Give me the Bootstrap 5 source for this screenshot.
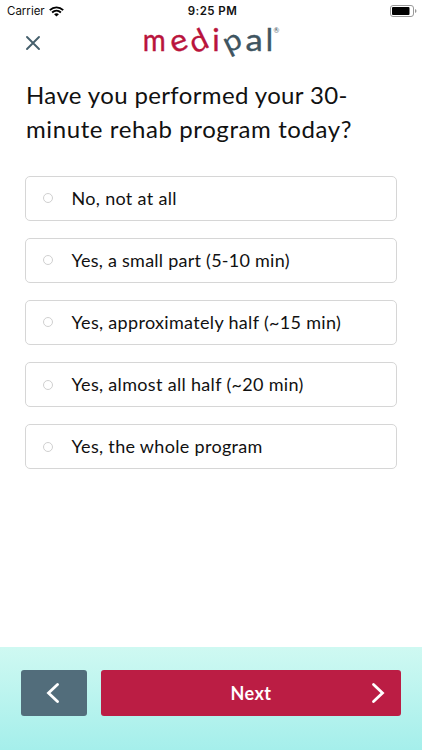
<!DOCTYPE html>
<html lang="en">
<head>
<meta charset="utf-8">
<meta name="viewport" content="width=device-width, initial-scale=1">
<title>Medipal</title>
<link href="https://cdn.jsdelivr.net/npm/bootstrap@5.3.0/dist/css/bootstrap.min.css" rel="stylesheet">
<style>
body { font-family: Lato, sans-serif; color: #111; background: #fff; }
.screen { height: 750px; overflow: hidden; }
.status { height: 22px; font-family: Inter, sans-serif; font-size: 11.5px; line-height: 22px; padding: 0 5px 0 7px; color: #111; }
.status > div { flex: 1 1 0; }
.clock { letter-spacing: .45px; padding-left: 1px; }
.topbar { height: 56px; padding: 0 25px; }
.topbar .close-btn { width: 16px; height: 42px; }
.logo { margin: -12px 0 0 96px; overflow: visible; }
.question { font-size: 24px; line-height: 34px; padding: 0 26px; margin: 0 0 29.5px; font-weight: 400; }
.l1 { letter-spacing: .37px; }
.l2 { letter-spacing: .6px; }
.answers { padding: 0 25px; gap: 17px; }
.answer { height: 45.2px; border: 1px solid #d6d6d6; border-radius: 5px; padding-left: 17px; font-size: 18px; letter-spacing: .32px; cursor: pointer; }
.answer .form-check-input { width: 10px; height: 10px; border: 1px solid #d0d0d0; margin: 0 18.5px 0 0; }
.answer .tight { letter-spacing: .25px; }
.footer-bar { height: 103px; padding: 23px 21px 0 21px; gap: 14px; background: linear-gradient(#cff9f2, #a5efeb); }
.footer-bar .btn { height: 46px; border: 0; border-radius: 3px; color: #fff; }
.btn-back { width: 66px; background: #526d7b; }
.footer-bar .btn-next { background: #bb1d44; font-size: 18px; font-weight: 700; letter-spacing: .5px; }
.btn-next .chevron { width: 32px; }
.next-label { padding-left: 32px; }
</style>
<script src="https://cdn.jsdelivr.net/npm/bootstrap@5.3.0/dist/js/bootstrap.bundle.min.js"></script>
</head>
<body>
<div class="screen d-flex flex-column">
  <div class="status d-flex">
    <div class="d-flex align-items-center"><span>Carrier</span>
      <svg class="ms-1" width="15" height="11" viewBox="0 0 15 11" fill="none" stroke="#000" stroke-width="1.9"><path d="M.8 4.1C4.7.4 10.3.4 14.2 4.1M3.1 6.5c2.6-2.3 6.2-2.3 8.8 0"/><path d="M7.5 10.6 5.1 8.2c1.4-1.2 3.4-1.2 4.8 0z" fill="#000" stroke="none"/></svg>
    </div>
    <div class="clock text-center fw-semibold">9:25 PM</div>
    <div class="d-flex justify-content-end align-items-center">
      <svg width="27" height="12" viewBox="0 0 27 12"><rect x=".5" y=".5" width="23" height="11" rx="2.5" fill="#fff" stroke="#999"/><rect x="2" y="2" width="17.5" height="8" rx="1" fill="#000"/><path d="M25 4v4q1.5-.6 1.5-2T25 4" fill="#999"/></svg>
    </div>
  </div>
  <header class="topbar d-flex align-items-start">
    <button class="close-btn btn p-0 border-0 d-flex align-items-center" aria-label="Close"><svg width="16" height="16" viewBox="0 0 16 16" stroke="#455f6c" stroke-width="1.9" stroke-linecap="round"><path d="m2 2 12 12M14 2 2 14"/></svg></button>
    <svg class="logo" width="150" height="60" viewBox="137 10 150 60" font-family="Lato, sans-serif" font-size="31" text-anchor="middle" stroke-width=".4" role="img" aria-label="medipal">
      <g fill="#b9143c" stroke="#b9143c">
        <text transform="translate(154.2 51) scale(.9 1)">m</text>
        <text transform="translate(179 43) rotate(-20) scale(1.04 1) translate(0 8)">e</text>
        <text transform="translate(200 43) rotate(-26) scale(1.04 .97) translate(-.5 8)" stroke-width=".2">d</text>
        <text x="216" y="51">i</text>
      </g>
      <g fill="#3f5561" stroke="#3f5561">
        <text transform="translate(232.5 43) rotate(-26) scale(1.04 .93) translate(.5 8)" stroke-width=".2">p</text>
        <text transform="translate(254 51) scale(1.12 1)">a</text>
        <text x="269.5" y="51">l</text>
        <text x="276.5" y="33" font-size="7" stroke="none">®</text>
      </g>
    </svg>
  </header>
  <h1 class="question"><span class="l1">Have you performed your 30-</span><br><span class="l2">minute rehab program today?</span></h1>
  <div class="answers d-flex flex-column">
    <label class="answer d-flex align-items-center"><input class="form-check-input" type="radio" name="rehab"><span>No, not at all</span></label>
    <label class="answer d-flex align-items-center"><input class="form-check-input" type="radio" name="rehab"><span class="tight">Yes, a small part (5-10 min)</span></label>
    <label class="answer d-flex align-items-center"><input class="form-check-input" type="radio" name="rehab"><span>Yes, approximately half (~15 min)</span></label>
    <label class="answer d-flex align-items-center"><input class="form-check-input" type="radio" name="rehab"><span>Yes, almost all half (~20 min)</span></label>
    <label class="answer d-flex align-items-center"><input class="form-check-input" type="radio" name="rehab"><span>Yes, the whole program</span></label>
  </div>
  <footer class="footer-bar d-flex mt-auto">
    <button class="btn btn-back p-0 pe-1 d-flex align-items-center justify-content-center" aria-label="Back"><svg width="14" height="22" viewBox="0 0 14 22" fill="none" stroke="#fff" stroke-width="2.8" stroke-linecap="round"><path d="m12.5 2.5-9 8.5 9 8.5"/></svg></button>
    <button class="btn btn-next p-0 flex-grow-1 d-flex align-items-center"><span class="next-label flex-grow-1 text-center">Next</span><svg class="chevron" width="32" height="22" viewBox="0 0 32 22" fill="none" stroke="#fff" stroke-width="2.8" stroke-linecap="round"><path d="m4.5 2.5 9 8.5-9 8.5"/></svg></button>
  </footer>
</div>
</body>
</html>
